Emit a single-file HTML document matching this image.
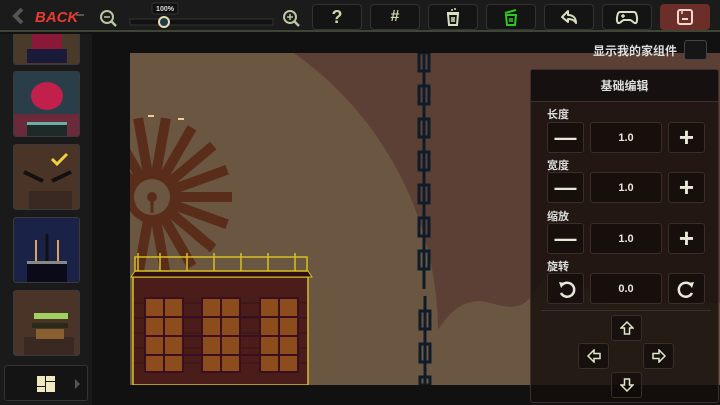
<!DOCTYPE html>
<html><head><meta charset="utf-8"><style>
*{margin:0;padding:0;box-sizing:border-box}
html,body{width:720px;height:405px;overflow:hidden}
body{background:#111;font-family:"Liberation Sans","Noto Sans CJK SC",sans-serif;position:relative}
.abs{position:absolute}
.top{left:0;top:0;width:720px;height:32px;background:#1b1b1b;border-bottom:2px solid #3d4535}
.tb{position:absolute;top:4px;width:50px;height:26px;border:1px solid #333;border-radius:4px;background:#141414;display:flex;align-items:center;justify-content:center}
.side{left:0;top:34px;width:92px;height:371px;background:#1a1a1a;overflow:hidden}
.th{position:absolute;left:13px;width:67px;height:66px;border:1px solid #3a3a3a;border-radius:3px;overflow:hidden}
.panel{left:530px;top:69px;width:189px;height:334px;background:rgba(20,12,10,0.8);border:1px solid #3a3030;border-radius:3px;overflow:hidden}
.lbl{position:absolute;left:16px;color:#ddd;font-size:11px;font-weight:bold}
.bx{position:absolute;height:31px;border:1px solid #3a2e2a;border-radius:3px;background:rgba(15,10,8,0.6);display:flex;align-items:center;justify-content:center;color:#e8e8d8;font-size:11px;font-weight:bold}
.ar{position:absolute;width:31px;height:26px;border:1px solid #3a2e2a;border-radius:3px;background:rgba(15,10,8,0.6);display:flex;align-items:center;justify-content:center}
</style></head><body>
<div class="abs top">
 <svg class="abs" style="left:0;top:0" width="310" height="32">
  <path d="M22 9 L15 16 L22 23" stroke="#555" stroke-width="4" fill="none"/>
  <text x="35" y="22" font-family="Liberation Sans" font-style="italic" font-weight="bold" font-size="15" fill="#e83a30">BACK</text>
  <line x1="76" y1="15" x2="84" y2="15" stroke="#555" stroke-width="2"/>
  <circle cx="107" cy="17" r="6" stroke="#b8c8a0" stroke-width="2" fill="none"/><line x1="111" y1="21" x2="116" y2="26" stroke="#b8c8a0" stroke-width="2.5"/><line x1="104" y1="17" x2="110" y2="17" stroke="#b8c8a0" stroke-width="1.5"/>
  <rect x="130" y="19" width="143" height="6" fill="#111" stroke="#333"/>
  <rect x="152" y="3" width="26" height="11" rx="2" fill="#111" stroke="#333"/>
  <text x="165" y="11" font-size="7" fill="#ddd" text-anchor="middle" font-weight="bold">100%</text>
  <circle cx="164" cy="22" r="5" fill="#1d3c48" stroke="#e8dcb0" stroke-width="2"/>
  <circle cx="290" cy="17" r="6" stroke="#b8c8a0" stroke-width="2" fill="none"/><line x1="294" y1="21" x2="299" y2="26" stroke="#b8c8a0" stroke-width="2.5"/><line x1="287" y1="17" x2="293" y2="17" stroke="#b8c8a0" stroke-width="1.5"/><line x1="290" y1="14" x2="290" y2="20" stroke="#b8c8a0" stroke-width="1.5"/>
 </svg>
 <div class="tb" style="left:312px"><span style="color:#c8d8a8;font-weight:bold;font-size:18px">?</span></div>
 <div class="tb" style="left:370px"><span style="color:#c8d8a8;font-weight:bold;font-size:16px">#</span></div>
 <div class="tb" style="left:428px"><svg width="20" height="20"><path d="M5 7 H15 L14 18 H6 Z" fill="none" stroke="#d8e0c0" stroke-width="2"/><line x1="4" y1="6" x2="16" y2="6" stroke="#d8e0c0" stroke-width="2"/><line x1="9" y1="10" x2="9" y2="15" stroke="#d8e0c0" stroke-width="1.5"/><line x1="11" y1="10" x2="11" y2="15" stroke="#d8e0c0" stroke-width="1.5"/><circle cx="9" cy="3" r="1" fill="#d8e0c0"/><circle cx="12" cy="2" r="1" fill="#d8e0c0"/></svg></div>
 <div class="tb" style="left:486px"><svg width="20" height="20"><path d="M5 8 H15 L14 18 H6 Z" fill="none" stroke="#2ec81e" stroke-width="2"/><line x1="4" y1="6" x2="15" y2="3" stroke="#2ec81e" stroke-width="2"/><line x1="9" y1="11" x2="9" y2="15" stroke="#2ec81e" stroke-width="1.5"/><line x1="11" y1="11" x2="11" y2="15" stroke="#2ec81e" stroke-width="1.5"/></svg></div>
 <div class="tb" style="left:544px"><svg width="20" height="20"><path d="M9 4 L3 10 L9 15 V12 C13 12 15 13 17 16 C17 11 14 8 9 8 Z" fill="none" stroke="#d8e0c0" stroke-width="2" stroke-linejoin="round"/></svg></div>
 <div class="tb" style="left:602px"><svg width="24" height="20"><path d="M5 5 H19 C22 5 23 14 21 16 C19 17 17 13 15 13 H9 C7 13 5 17 3 16 C1 14 2 5 5 5 Z" fill="none" stroke="#d8e0c0" stroke-width="2"/><line x1="6" y1="9" x2="10" y2="9" stroke="#d8e0c0" stroke-width="1.5"/><line x1="8" y1="7" x2="8" y2="11" stroke="#d8e0c0" stroke-width="1.5"/></svg></div>
 <div class="tb" style="left:660px;background:#6b2e28;border-color:#6b2e28"><svg width="20" height="20"><rect x="3" y="3" width="14" height="14" rx="2" fill="none" stroke="#f0d8d0" stroke-width="2"/><line x1="7" y1="12" x2="13" y2="12" stroke="#f0d8d0" stroke-width="2"/><line x1="7" y1="4" x2="7" y2="7" stroke="#f0d8d0" stroke-width="1.5"/></svg></div>
</div>

<div class="abs side">
 <div class="th" style="top:-4px;height:35px;background:#4a3a2a"><div class="abs" style="left:18px;top:0;width:30px;height:18px;background:#8a1838"></div><div class="abs" style="left:13px;top:18px;width:40px;height:14px;background:#1a1a3a"></div></div>
 <div class="th" style="top:37px;background:#2a3e4a"><div class="abs" style="left:17px;top:10px;width:32px;height:28px;border-radius:50%;background:#c0204a"></div><div class="abs" style="left:0;top:42px;width:67px;height:24px;background:#6a2a3a"></div><div class="abs" style="left:13px;top:50px;width:40px;height:16px;background:#1e2a2a;border-top:3px solid #6ab0a0"></div></div>
 <div class="th" style="top:110px;background:#4a3428"><svg width="67" height="66"><path d="M38 14 L43 19 L53 9" stroke="#f0d040" stroke-width="3" fill="none"/><line x1="10" y1="27" x2="29" y2="36" stroke="#111" stroke-width="4"/><line x1="57" y1="27" x2="38" y2="36" stroke="#111" stroke-width="4"/><rect x="15" y="46" width="43" height="20" fill="#3a2822"/></svg></div>
 <div class="th" style="top:183px;background:#1a2248"><svg width="67" height="66"><rect x="13" y="46" width="40" height="20" fill="#0a0a18"/><rect x="13" y="43" width="40" height="3" fill="#888"/><line x1="22" y1="43" x2="22" y2="22" stroke="#e0a060" stroke-width="2"/><line x1="33" y1="43" x2="33" y2="16" stroke="#111" stroke-width="3"/><line x1="44" y1="43" x2="44" y2="22" stroke="#e0a060" stroke-width="2"/></svg></div>
 <div class="th" style="top:256px;background:#4a3428"><svg width="67" height="66"><rect x="20" y="22" width="34" height="6" fill="#a0d060"/><rect x="18" y="32" width="36" height="5" fill="#2a2a1a"/><rect x="10" y="46" width="50" height="20" fill="#3a2822"/><rect x="22" y="38" width="28" height="10" fill="#8a6030"/></svg></div>
 <div class="abs" style="left:4px;top:331px;width:84px;height:36px;border:1px solid #333;border-radius:3px;background:#141414"><svg width="82" height="34"><rect x="32" y="10" width="8" height="10" fill="#f0e8c0"/><rect x="41" y="10" width="9" height="5" fill="#f0e8c0"/><rect x="41" y="16" width="9" height="10" fill="#f0e8c0"/><rect x="32" y="21" width="8" height="5" fill="#f0e8c0"/><path d="M70 13 L75 18 L70 23 Z" fill="#555"/></svg></div>
</div>

<svg class="abs" style="left:130px;top:53px" width="590" height="332">
 <rect width="590" height="332" fill="#5c4035"/>
 <ellipse cx="-20" cy="280" rx="328" ry="338" fill="#6b5741"/>
 <path d="M290 332 C300 270 330 240 360 250 C380 255 395 260 410 230 C430 210 460 240 480 250 L590 250 L590 332 Z" fill="#6b5741"/>
 <g transform="translate(22,144)" fill="#5a2c1a">
  <g id="b"><rect x="18" y="-5" width="62" height="10"/></g>
  <use href="#b" transform="rotate(-20)"/><use href="#b" transform="rotate(-40)"/><use href="#b" transform="rotate(-60)"/><use href="#b" transform="rotate(-80)"/><use href="#b" transform="rotate(-100)"/><use href="#b" transform="rotate(-120)"/><use href="#b" transform="rotate(20)"/><use href="#b" transform="rotate(40)"/><use href="#b" transform="rotate(60)"/><use href="#b" transform="rotate(80)"/><use href="#b" transform="rotate(100)"/><use href="#b" transform="rotate(-160)"/><use href="#b" transform="rotate(160)"/><use href="#b" transform="rotate(-140)"/>
  <circle r="22" fill="none" stroke="#5a2c1a" stroke-width="8"/>
  <circle r="5"/><rect x="-1.5" y="0" width="3" height="16"/>
 </g>
 <rect x="18" y="62" width="6" height="2" fill="#f0d090"/><rect x="48" y="65" width="6" height="2" fill="#f0d090"/>
 <rect x="3" y="224" width="175" height="108" fill="#4a1c1a" stroke="#d8c020" stroke-width="1.5"/>
 <g stroke="#3a1214" stroke-width="1"><line x1="4" y1="250" x2="177" y2="250"/><line x1="4" y1="265" x2="177" y2="265"/><line x1="4" y1="280" x2="177" y2="280"/><line x1="4" y1="295" x2="177" y2="295"/><line x1="4" y1="310" x2="177" y2="310"/></g>
 <path d="M1 224 L5 218 H178 L182 224 Z" fill="#2e0e14" stroke="#d8c020"/>
 <g fill="none" stroke="#d8c020" stroke-width="1.5"><rect x="5" y="204" width="172" height="14"/><line x1="30" y1="200" x2="30" y2="218"/><line x1="57" y1="200" x2="57" y2="218"/><line x1="84" y1="200" x2="84" y2="218"/><line x1="111" y1="200" x2="111" y2="218"/><line x1="138" y1="200" x2="138" y2="218"/><line x1="165" y1="200" x2="165" y2="218"/><line x1="8" y1="200" x2="8" y2="218"/></g>
 <g fill="#8c4c1c" stroke="#3a1020" stroke-width="2">
  <rect x="15" y="245" width="38" height="74"/><rect x="72" y="245" width="38" height="74"/><rect x="130" y="245" width="38" height="74"/>
 </g>
 <g stroke="#3a1020" stroke-width="2"><line x1="34" y1="245" x2="34" y2="319"/><line x1="91" y1="245" x2="91" y2="319"/><line x1="149" y1="245" x2="149" y2="319"/><line x1="15" y1="264" x2="168" y2="264"/><line x1="15" y1="283" x2="168" y2="283"/><line x1="15" y1="302" x2="168" y2="302"/></g>
 <g fill="none" stroke="#0e1c2a" stroke-width="3">
  <rect x="289" y="0" width="10" height="18"/><rect x="289" y="33" width="10" height="18"/><rect x="289" y="66" width="10" height="18"/><rect x="289" y="99" width="10" height="18"/><rect x="289" y="132" width="10" height="18"/><rect x="289" y="165" width="10" height="18"/><rect x="289" y="198" width="10" height="18"/><rect x="290" y="258" width="10" height="18"/><rect x="290" y="291" width="10" height="18"/><rect x="290" y="324" width="10" height="8"/>
  <line x1="294" y1="0" x2="294" y2="236"/><line x1="295" y1="243" x2="295" y2="332"/>
 </g>
</svg>

<div class="abs" style="left:593px;top:42px;color:#ddd;font-size:12px;font-weight:bold">显示我的家组件</div>
<div class="abs" style="left:684px;top:40px;width:23px;height:20px;border:1px solid #444;border-radius:3px;background:#161616"></div>

<div class="abs panel">
 <div class="abs" style="left:0;top:0;width:187px;height:32px;background:#161010;border-bottom:1px solid #3a3030;color:#ddd;font-size:12px;font-weight:bold;text-align:center;line-height:32px">基础编辑</div>
 <div class="lbl" style="top:36px">长度</div>
 <div class="bx" style="left:16px;top:52px;width:37px;font-size:22px">—</div><div class="bx" style="left:59px;top:52px;width:72px">1.0</div><div class="bx" style="left:137px;top:52px;width:37px;font-size:26px">+</div>
 <div class="lbl" style="top:87px">宽度</div>
 <div class="bx" style="left:16px;top:102px;width:37px;font-size:22px">—</div><div class="bx" style="left:59px;top:102px;width:72px">1.0</div><div class="bx" style="left:137px;top:102px;width:37px;font-size:26px">+</div>
 <div class="lbl" style="top:138px">缩放</div>
 <div class="bx" style="left:16px;top:153px;width:37px;font-size:22px">—</div><div class="bx" style="left:59px;top:153px;width:72px">1.0</div><div class="bx" style="left:137px;top:153px;width:37px;font-size:26px">+</div>
 <div class="lbl" style="top:188px">旋转</div>
 <div class="bx" style="left:16px;top:203px;width:37px"><svg width="20" height="20"><path d="M6 6 A7 7 0 1 1 5 14" fill="none" stroke="#e8e8d8" stroke-width="2.5"/><path d="M3 3 L9 4 L5 9 Z" fill="#e8e8d8"/></svg></div><div class="bx" style="left:59px;top:203px;width:72px">0.0</div><div class="bx" style="left:137px;top:203px;width:37px"><svg width="20" height="20"><path d="M14 6 A7 7 0 1 0 15 14" fill="none" stroke="#e8e8d8" stroke-width="2.5"/><path d="M17 3 L11 4 L15 9 Z" fill="#e8e8d8"/></svg></div>
 <div class="abs" style="left:10px;top:240px;width:170px;height:1px;background:#3a3030"></div>
 <div class="ar" style="left:80px;top:245px"><svg width="14" height="14"><path d="M7 1 L13 7 H9.5 V13 H4.5 V7 H1 Z" fill="none" stroke="#e0e8c8" stroke-width="1.5"/></svg></div>
 <div class="ar" style="left:47px;top:273px"><svg width="14" height="14"><path d="M1 7 L7 1 V4.5 H13 V9.5 H7 V13 Z" fill="none" stroke="#e0e8c8" stroke-width="1.5"/></svg></div>
 <div class="ar" style="left:112px;top:273px"><svg width="14" height="14"><path d="M13 7 L7 1 V4.5 H1 V9.5 H7 V13 Z" fill="none" stroke="#e0e8c8" stroke-width="1.5"/></svg></div>
 <div class="ar" style="left:80px;top:302px"><svg width="14" height="14"><path d="M7 13 L13 7 H9.5 V1 H4.5 V7 H1 Z" fill="none" stroke="#e0e8c8" stroke-width="1.5"/></svg></div>
</div>
</body></html>
